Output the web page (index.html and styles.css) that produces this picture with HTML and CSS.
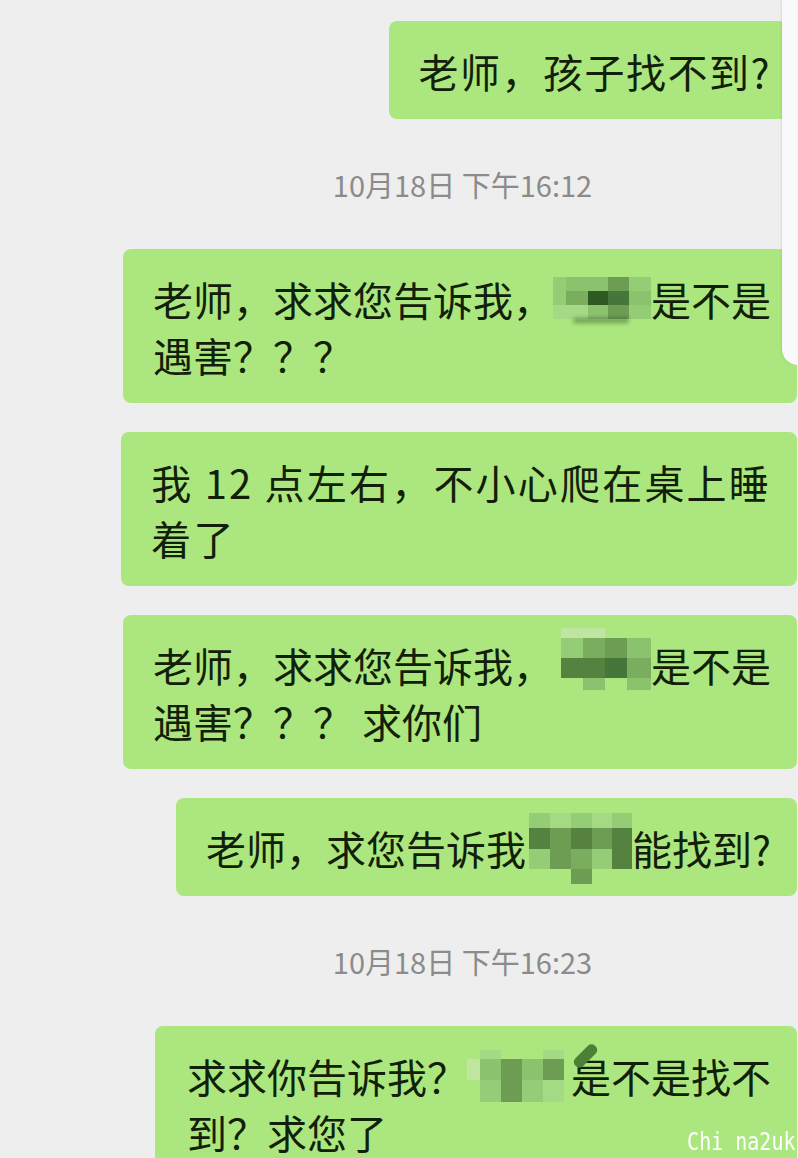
FILE: index.html
```html
<!DOCTYPE html>
<html lang="zh-CN">
<head>
    <meta charset="UTF-8">
    <meta name="viewport" content="width=device-width, initial-scale=1.0">
    <title>聊天记录</title>
    <link rel="stylesheet" href="styles.css">
</head>
<body>
    <div class="screen">
        <div class="chat">
            <div class="bubble loose">老师，孩子找不到?</div>

            <div class="time">10月18日 下午16:12</div>

            <div class="bubble">老师，求求您告诉我，<span class="mosaic mz-a"><i class="g3"></i><i class="g4"></i><i class="g4"></i><i class="g6"></i><i class="g3"></i><i class="g3"></i><i class="g5"></i><i class="g9"></i><i class="g8"></i><i class="g4"></i><i class="g2"></i><i class="g2"></i><i class="g4"></i><i class="g6"></i><i class="g3"></i><b class="smudge"></b></span>是不是<br>遇害？？？</div>

            <div class="bubble looser">我 12 点左右，不小心爬在桌上睡<br>着了</div>

            <div class="bubble">老师，求求您告诉我，<span class="mosaic mz-b"><i></i><i class="g1"></i><i class="g1"></i><i></i><i></i><i></i><i class="g3"></i><i class="g5"></i><i class="g6"></i><i class="g4"></i><i></i><i class="g7"></i><i class="g7"></i><i class="g8"></i><i class="g5"></i><i></i><i></i><i class="g4"></i><i></i><i class="g4"></i></span>是不是<br>遇害？？？ 求你们</div>

            <div class="bubble">老师，求您告诉我<span class="mosaic mz-c"><i></i><i class="g3"></i><i class="g2"></i><i class="g3"></i><i class="g2"></i><i class="g3"></i><i></i><i class="g7"></i><i class="g6"></i><i class="g7"></i><i class="g6"></i><i class="g7"></i><i></i><i class="g3"></i><i class="g6"></i><i class="g5"></i><i class="g3"></i><i class="g7"></i><i></i><i></i><i></i><i class="g6"></i><i></i><i></i></span>能找到?</div>

            <div class="time">10月18日 下午16:23</div>

            <div class="bubble last">求求你告诉我？<span class="mosaic mz-d"><i></i><i class="g2"></i><i></i><i></i><i class="g2"></i><i></i><i class="g1"></i><i class="g4"></i><i class="g6"></i><i class="g4"></i><i class="g6"></i><i></i><i></i><i class="g3"></i><i class="g6"></i><i class="g3"></i><i class="g2"></i><i></i><b class="pen"></b></span>是不是找不<br>到？求您了</div>
        </div>

        <!-- edge of the phone frame on the right -->
        <div class="edge"></div>
        <div class="mark">Chi na2uk</div>
    </div>
</body>
</html>
```

FILE: styles.css
```css
body {
    margin: 0;
    padding: 0;
    background-color: #eeeeee;
    font-family: "Noto Sans CJK SC", "Noto Sans", sans-serif;
    color: #122009;
}

.screen {
    position: relative;
    width: 798px;
    height: 1158px;
    overflow: hidden;
    background-color: #eeeeee;
}

.chat {
    display: flex;
    flex-direction: column;
    align-items: flex-end;
    gap: 29px;
    padding: 21px 1px 0 0;
}

.bubble {
    background-color: #abe77e;
    border-radius: 8px;
    padding: 22px 26px 20px 30px;
    font-size: 40px;
    line-height: 56px;
    white-space: nowrap;
}

.loose {
    letter-spacing: 1.5px;
}

.looser {
    letter-spacing: 2.2px;
}

.last {
    padding-left: 32px;
}

.time {
    align-self: stretch;
    height: 72px;
    display: flex;
    align-items: center;
    justify-content: center;
    padding-left: 128px;
    font-size: 29px;
    color: #8b8b8b;
}

/* pixelated name blocks */
.mosaic {
    position: relative;
    display: inline-grid;
    vertical-align: top;
}

.mosaic i {
    display: block;
}

.mz-a {
    grid-template-columns: 13px 22px 20px 21px 22px;
    grid-template-rows: 14px 14px 14px;
    margin-top: 6px;
}

.mz-b {
    grid-template-columns: 8px 22px 22px 22px 24px;
    grid-template-rows: 10px 20px 20px 12px;
    margin-top: -9px;
}

.mz-c {
    grid-template-columns: 3px 21px 21px 21px 20px 20px;
    grid-template-rows: 15px 21px 20px 15px;
    margin: -7px 0 -8px;
}

.mz-d {
    grid-template-columns: 13px 21px 21px 21px 21px 7px;
    grid-template-rows: 9px 21px 22px;
    margin-top: 2px;
}

.g1 { background-color: #bfe6a0; }
.g2 { background-color: #a4da84; }
.g3 { background-color: #95cc76; }
.g4 { background-color: #8bc26e; }
.g5 { background-color: #7aae5e; }
.g6 { background-color: #6c9d52; }
.g7 { background-color: #55833f; }
.g8 { background-color: #46773a; }
.g9 { background-color: #2e5a22; }

.smudge {
    position: absolute;
    left: 20px;
    right: 22px;
    bottom: -4px;
    height: 5px;
    background-color: rgba(40, 60, 30, 0.45);
    border-radius: 3px;
    filter: blur(2px);
}

.pen {
    position: absolute;
    right: -20px;
    top: -8px;
    width: 11px;
    height: 28px;
    background-color: #4d7f36;
    border-radius: 5px;
    transform: rotate(45deg);
}

.edge {
    position: absolute;
    top: 0;
    right: 0;
    width: 16px;
    height: 365px;
    background-color: #f9f9f9;
    border-bottom-left-radius: 16px;
    box-shadow: -1px 0 2px rgba(0, 0, 0, 0.08);
}

.mark {
    position: absolute;
    right: 3px;
    bottom: 2px;
    font-family: "DejaVu Sans Mono", monospace;
    font-size: 25px;
    color: #ffffff;
    transform: scaleX(0.8);
    transform-origin: right bottom;
}
```
